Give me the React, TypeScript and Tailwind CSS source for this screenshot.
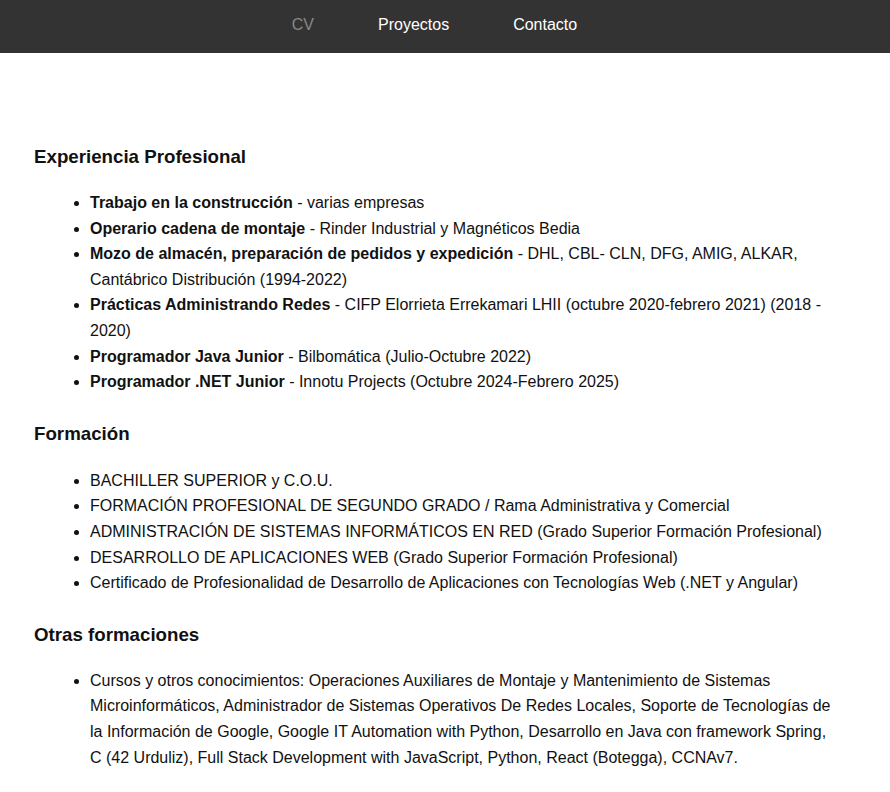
import React from "react";

const experiencia = [
  { b: "Trabajo en la construcción", t: " - varias empresas" },
  { b: "Operario cadena de montaje", t: " - Rinder Industrial y Magnéticos Bedia" },
  {
    b: "Mozo de almacén, preparación de pedidos y expedición",
    t: " - DHL, CBL- CLN, DFG, AMIG, ALKAR, Cantábrico Distribución (1994-2022)",
  },
  {
    b: "Prácticas Administrando Redes",
    t: " - CIFP Elorrieta Errekamari LHII (octubre 2020-febrero 2021) (2018 - 2020)",
  },
  { b: "Programador Java Junior", t: " - Bilbomática (Julio-Octubre 2022)" },
  { b: "Programador .NET Junior", t: " - Innotu Projects (Octubre 2024-Febrero 2025)" },
];

const formacion = [
  "BACHILLER SUPERIOR y C.O.U.",
  "FORMACIÓN PROFESIONAL DE SEGUNDO GRADO / Rama Administrativa y Comercial",
  "ADMINISTRACIÓN DE SISTEMAS INFORMÁTICOS EN RED (Grado Superior Formación Profesional)",
  "DESARROLLO DE APLICACIONES WEB (Grado Superior Formación Profesional)",
  "Certificado de Profesionalidad de Desarrollo de Aplicaciones con Tecnologías Web (.NET y Angular)",
];

const otras = [
  "Cursos y otros conocimientos: Operaciones Auxiliares de Montaje y Mantenimiento de Sistemas Microinformáticos, Administrador de Sistemas Operativos De Redes Locales, Soporte de Tecnologías de la Información de Google, Google IT Automation with Python, Desarrollo en Java con framework Spring, C (42 Urduliz), Full Stack Development with JavaScript, Python, React (Botegga), CCNAv7.",
];

export default function App() {
  return (
    <div className="min-h-screen bg-white text-[#111] font-['Liberation_Sans',Arial,sans-serif]">
      <header className="h-[53px] bg-[#333333]">
        <nav className="flex h-full items-center justify-center pr-[21px] pb-[4px] text-[16px]">
          <a className="px-8 text-[#888888]">CV</a>
          <a className="px-8 text-white">Proyectos</a>
          <a className="px-8 text-white">Contacto</a>
        </nav>
      </header>

      <main className="pl-[34px] pr-[52px] pt-[88px] pb-6">
        <section>
          <h3 className="text-[18.72px] font-bold leading-[32px]">Experiencia Profesional</h3>
          <ul className="mt-[17px] list-disc pl-[56px] text-[16px] leading-[25.6px]">
            {experiencia.map((e) => (
              <li key={e.b}>
                <strong className="font-bold">{e.b}</strong>
                {e.t}
              </li>
            ))}
          </ul>
        </section>

        <section className="mt-[23px]">
          <h3 className="text-[18.72px] font-bold leading-[32px]">Formación</h3>
          <ul className="mt-[18px] list-disc pl-[56px] text-[16px] leading-[25.6px]">
            {formacion.map((f) => (
              <li key={f}>{f}</li>
            ))}
          </ul>
        </section>

        <section className="mt-[23px]">
          <h3 className="text-[18.72px] font-bold leading-[32px]">Otras formaciones</h3>
          <ul className="mt-[17px] list-disc pl-[56px] text-[16px] leading-[25.6px]">
            {otras.map((o) => (
              <li key={o}>{o}</li>
            ))}
          </ul>
        </section>
      </main>
    </div>
  );
}
